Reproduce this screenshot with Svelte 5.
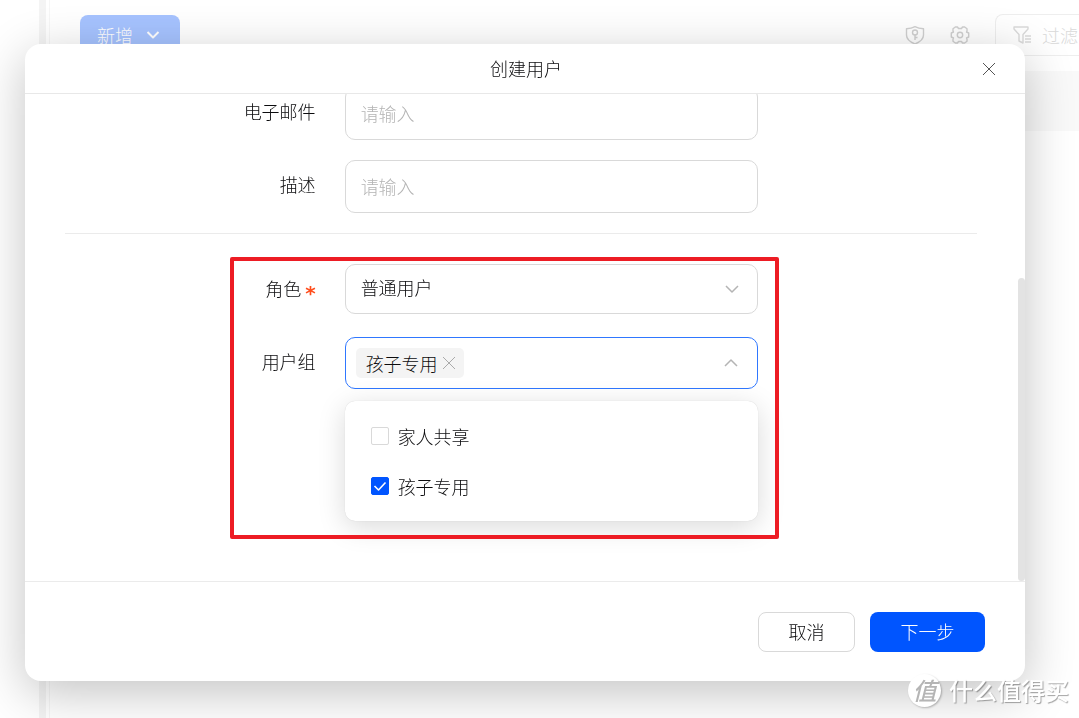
<script>
  let email = "";
  let description = "";
  let role = "普通用户";
  let groups = ["家人共享", "孩子专用"];
  let selected = ["孩子专用"];
  let menuOpen = true;

  const removeGroup = (name) => {
    selected = selected.filter((item) => item !== name);
  };
</script>

<div class="page">
  <div class="rail"></div>
  <main>
    <div class="toolbar">
      <button class="add">
        新增
        <svg width="14" height="10" viewBox="0 0 14 10"><path d="M1.5 2 7 7.5 12.5 2" /></svg>
      </button>
      <div class="tools">
        <button class="tool" aria-label="权限">
          <svg width="20" height="20" viewBox="0 0 20 20">
            <path d="M10 1.700C7.500 3.100 4.500 3.700 1.500 3.700V10c0 4.500 3.500 7 8.500 9 5-2 8.500-4.500 8.500-9V3.700C15.500 3.700 12.500 3.100 10 1.700Z" />
            <circle cx="10" cy="7.500" r="2.500" />
            <path d="M10 10V15M10 12.500h2.500" />
          </svg>
        </button>
        <button class="tool" aria-label="设置">
          <svg width="20" height="20" viewBox="0 0 20 20">
            <path d="M5.300 2h2.200L8.500 3.500h3L12.500 2h2.200L17 3.700V6L16.500 7L18.700 8v4L16.500 13L17 14V16.300L14.700 18H12.500L11.500 16.500h-3L7.500 18H5.300L3 16.300V14L3.500 13L1.300 12V8L3.500 7L3 6V3.700Z" />
            <circle cx="10" cy="10" r="2.700" />
          </svg>
        </button>
        <button class="filter">
          <svg width="19" height="18" viewBox="0 0 19 18">
            <path d="M1 1h14v2L10 8.500V17l-4-2V8.500L1 3ZM12 10h6M12 13h6M12 16h6" />
          </svg>
          过滤
        </button>
      </div>
    </div>
    <div class="table-head"></div>
  </main>
</div>

<div class="overlay">
  <div class="modal" role="dialog" aria-labelledby="title">
    <header>
      <h1 id="title">创建用户</h1>
      <button class="close" aria-label="关闭">
        <svg width="14" height="14" viewBox="0 0 14 14"><path d="M1 1l12 12M13 1 1 13" /></svg>
      </button>
    </header>

    <div class="body">
      <form id="user-form" on:submit|preventDefault>
        <div class="row">
          <label for="email">电子邮件</label>
          <input id="email" class="control" type="text" placeholder="请输入" bind:value={email} />
        </div>
        <div class="row">
          <label for="description">描述</label>
          <input id="description" class="control" type="text" placeholder="请输入" bind:value={description} />
        </div>
        <hr />
        <section class="marked">
          <div class="row">
            <label for="role">角色<span class="required">*</span></label>
            <div class="select">
              <select id="role" class="control" bind:value={role}>
                <option>普通用户</option>
                <option>管理员</option>
              </select>
              <svg class="arrow" width="14" height="8" viewBox="0 0 14 8"><path d="M1 1l6 6 6-6" /></svg>
            </div>
          </div>
          <div class="row">
            <label for="groups">用户组</label>
            <div class="select">
              <div class="control multi" class:open={menuOpen}>
                {#each selected as name}
                  <span class="tag">
                    {name}
                    <button type="button" aria-label="移除" on:click={() => removeGroup(name)}>
                      <svg width="14" height="14" viewBox="0 0 14 14"><path d="M1 1l12 12M13 1 1 13" /></svg>
                    </button>
                  </span>
                {/each}
                <button id="groups" class="toggle" type="button" aria-expanded={menuOpen} on:click={() => (menuOpen = !menuOpen)}>
                  <svg width="14" height="8" viewBox="0 0 14 8"><path d="M1 7l6-6 6 6" /></svg>
                </button>
              </div>
              {#if menuOpen}
                <div class="menu">
                  {#each groups as name}
                    <label class="option">
                      <span class="check">
                        <input type="checkbox" value={name} bind:group={selected} />
                        <svg width="18" height="18" viewBox="0 0 18 18"><path d="M3.500 9l4 4L14.500 5.500" /></svg>
                      </span>
                      {name}
                    </label>
                  {/each}
                </div>
              {/if}
            </div>
          </div>
        </section>
      </form>
      <div class="scrollbar"></div>
    </div>

    <footer>
      <button class="cancel" type="button">取消</button>
      <button class="next" type="submit" form="user-form">下一步</button>
    </footer>
  </div>
</div>

<div class="watermark"><span class="badge">值</span>什么值得买</div>

<style>
  :global(body) {
    background: #fff;
    overflow: hidden;
  }
  .page,
  .overlay,
  .watermark {
    font-family: "Noto Sans CJK SC", sans-serif;
    font-size: 18px;
    font-weight: 300;
    color: #0c0c0e;
  }
  button,
  input,
  select {
    font: inherit;
    color: inherit;
    margin: 0;
    padding: 0;
    border: none;
    background: none;
    box-sizing: border-box;
  }
  button {
    cursor: pointer;
  }
  svg {
    display: block;
    fill: none;
    stroke: currentColor;
    stroke-linejoin: round;
  }
  .page {
    display: flex;
    height: 100vh;
    overflow: hidden;
  }
  .rail {
    flex: none;
    width: 3px;
    margin-left: 39px;
    border-left: 7px solid #f4f4f4;
    border-right: 1px solid #f6f6f6;
  }
  main {
    flex: 1;
    min-width: 0;
  }
  .toolbar {
    display: flex;
    justify-content: space-between;
    padding: 14px 0 15px 30px;
  }
  .add {
    display: flex;
    align-items: center;
    gap: 13px;
    height: 40px;
    margin-top: 1px;
    padding: 0 20px 0 17px;
    border-radius: 8px;
    background: #a6c3ff;
    color: #fff;
  }
  .add svg {
    stroke-width: 2;
  }
  .tools {
    display: flex;
    align-items: center;
    gap: 25px;
    color: #d0d0d0;
  }
  .tool svg {
    stroke-width: 1.4;
  }
  .filter {
    display: flex;
    align-items: center;
    gap: 10px;
    height: 42px;
    padding: 0 1px 0 17px;
    border: 1px solid #eee;
    border-right: none;
    border-radius: 8px 0 0 8px;
    color: #dadada;
    white-space: nowrap;
  }
  .filter svg {
    stroke-width: 1.4;
  }
  .table-head {
    height: 60px;
    background: #f9f9f9;
  }
  .overlay {
    position: fixed;
    inset: 0;
    display: flex;
    padding: 44px 54px 37px 25px;
  }
  .modal {
    flex: 1;
    display: flex;
    flex-direction: column;
    min-width: 0;
    border-radius: 16px;
    background: #fff;
    box-shadow: 0 12px 50px rgba(0, 0, 0, 0.24);
  }
  header {
    display: flex;
    align-items: center;
    height: 49px;
    padding: 0 29px 0 45px;
    border-bottom: 1px solid #e8e8e8;
  }
  h1 {
    flex: 1;
    margin: 0;
    padding-bottom: 2px;
    font-size: 18px;
    font-weight: 300;
    text-align: center;
  }
  .close {
    color: #555;
  }
  .body {
    flex: 1;
    display: flex;
    min-height: 0;
    overflow: hidden;
  }
  form {
    flex: 1;
    margin-top: -7px;
    padding: 0 41px 0 40px;
  }
  .row {
    display: grid;
    grid-template-columns: 54fr 89fr 41fr;
    column-gap: 29px;
    margin-bottom: 20px;
  }
  .row > label {
    line-height: 48px;
    text-align: right;
  }
  .required {
    margin-left: 4px;
    color: #ff4d1c;
    font-family: "DejaVu Sans", sans-serif;
    font-size: 20px;
    font-weight: 700;
    line-height: 20px;
    vertical-align: -4px;
  }
  .control {
    box-sizing: border-box;
    width: 100%;
    height: 53px;
    padding: 0 15px 1px;
    border: 1px solid #d9d9d9;
    border-radius: 10px;
    background: #fff;
    outline: none;
  }
  .control::placeholder {
    color: #b4b4b4;
    opacity: 1;
  }
  hr {
    height: 1px;
    margin: 0 0 30px;
    border: none;
    background: #ebebeb;
  }
  .marked {
    position: relative;
    padding-bottom: 129px;
  }
  .marked::after {
    content: "";
    position: absolute;
    top: -7px;
    bottom: -1px;
    left: 18.1%;
    right: 21.7%;
    border: 4px solid #ed1c24;
    border-radius: 2px;
    pointer-events: none;
  }
  .select {
    position: relative;
  }
  select.control {
    height: 50px;
    padding-bottom: 4px;
    appearance: none;
  }
  .marked .row:first-child {
    margin-bottom: 23px;
  }
  .arrow {
    position: absolute;
    top: 21px;
    right: 19px;
    color: #b4b4b4;
    stroke-width: 1.5;
    pointer-events: none;
  }
  .multi {
    display: flex;
    align-items: center;
    gap: 6px;
    height: 52px;
    padding: 0 0 0 10px;
  }
  .multi.open {
    border-color: #2f77ff;
  }
  .tag {
    display: flex;
    align-items: center;
    gap: 4px;
    height: 30px;
    padding: 0 8px 0 10px;
    border-radius: 5px;
    background: #f4f4f4;
    line-height: 28px;
    white-space: nowrap;
  }
  .tag button {
    color: #aaa;
  }
  .toggle {
    display: flex;
    align-items: center;
    justify-content: flex-end;
    align-self: stretch;
    flex: 1;
    padding-right: 19px;
    color: #b4b4b4;
  }
  .toggle svg {
    stroke-width: 1.5;
  }
  .menu {
    position: absolute;
    top: 64px;
    left: 0;
    right: 0;
    box-sizing: border-box;
    padding: 10px 0;
    border-radius: 10px;
    background: #fff;
    box-shadow: 0 0 1px rgba(0, 0, 0, 0.2), 0 6px 28px rgba(0, 0, 0, 0.15);
  }
  .option {
    display: flex;
    align-items: center;
    gap: 9px;
    height: 50px;
    padding: 0 26px;
    cursor: pointer;
  }
  .check {
    position: relative;
    width: 18px;
    height: 18px;
  }
  .check input {
    display: block;
    width: 18px;
    height: 18px;
    border: 1px solid #d9d9d9;
    border-radius: 2px;
    appearance: none;
  }
  .check input:checked {
    border-color: #0055ff;
    background: #0055ff;
  }
  .check svg {
    position: absolute;
    inset: 0;
    color: #fff;
    stroke-width: 1.6;
    pointer-events: none;
  }
  .scrollbar {
    width: 7px;
    height: 303px;
    align-self: flex-end;
    border-radius: 4px;
    background: #e3e3e3;
  }
  footer {
    display: flex;
    justify-content: flex-end;
    gap: 15px;
    padding: 30px 40px 29px;
    border-top: 1px solid #ebebeb;
  }
  footer button {
    height: 40px;
    padding: 0 29px 2px;
    border-radius: 8px;
  }
  .cancel {
    min-width: 97px;
    border: 1px solid #d9d9d9;
  }
  .next {
    min-width: 115px;
    background: #0055ff;
    color: #fff;
  }
  .watermark {
    position: fixed;
    right: 10px;
    bottom: 11px;
    display: flex;
    align-items: center;
    gap: 8px;
    font-size: 24px;
    font-weight: 500;
    line-height: 34px;
    color: #fff;
    text-shadow: 1px 1px 1px rgba(0, 0, 0, 0.35);
    pointer-events: none;
  }
  .badge {
    width: 33px;
    height: 33px;
    border-radius: 50%;
    background: #fff;
    box-shadow: 1px 1px 2px rgba(0, 0, 0, 0.25);
    color: #b5b5b5;
    font-style: italic;
    line-height: 32px;
    text-align: center;
    text-shadow: none;
  }
</style>
